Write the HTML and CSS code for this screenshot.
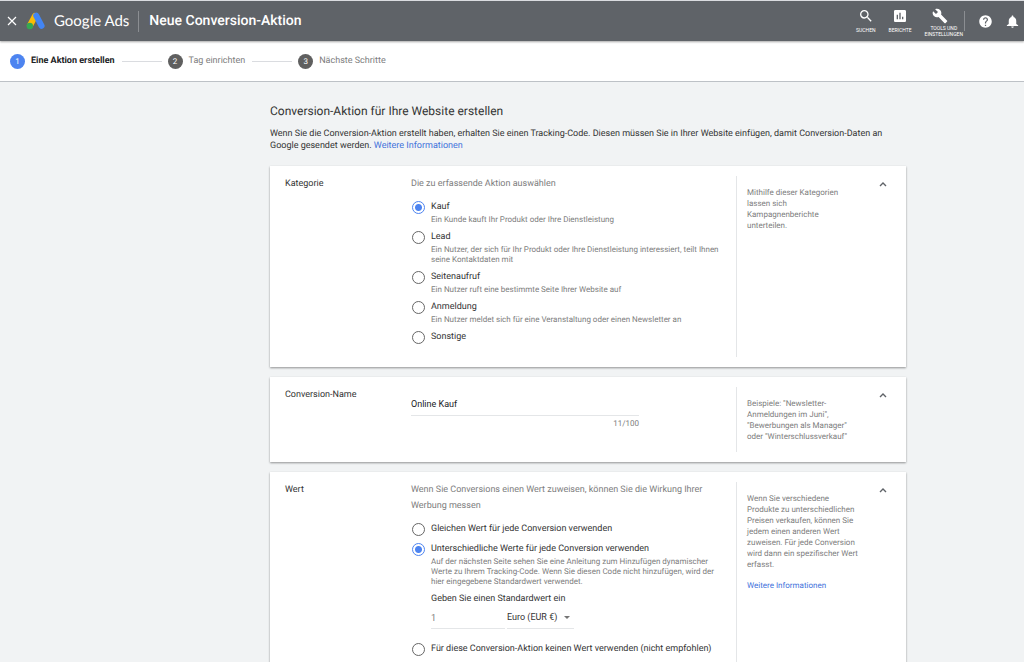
FILE: index.html
```
<!DOCTYPE html>
<html lang="de">
<head>
    <meta charset="UTF-8">
    <meta name="viewport" content="width=device-width, initial-scale=1.0">
    <title>Neue Conversion-Aktion - Google Ads</title>
    <link rel="stylesheet" href="styles.css">
</head>
<body>
    <header class="topbar">
        <button class="close" type="button" aria-label="Schließen">
            <svg width="10" height="10" viewBox="0 0 10 10"><path d="M1 1l8 8M9 1l-8 8" stroke="#fff" stroke-width="1.2"/></svg>
        </button>
        <svg class="logo" width="20" height="18" viewBox="0 0 20 18">
            <path d="M9 4L4 13.5" stroke="#fbbc04" stroke-width="6" stroke-linecap="round"/>
            <path d="M10.2 3.6L15.6 13.8" stroke="#4285f4" stroke-width="6" stroke-linecap="round"/>
            <circle cx="3.8" cy="14" r="3.2" fill="#34a853"/>
        </svg>
        <span class="brand">Google Ads</span>
        <h1 class="page-title">Neue Conversion-Aktion</h1>
        <nav class="tools">
            <button class="tool" type="button">
                <svg width="16" height="16" viewBox="0 0 24 24"><path fill="#fff" d="M15.5 14h-.79l-.28-.27A6.47 6.47 0 0 0 16 9.5 6.5 6.5 0 1 0 9.5 16c1.61 0 3.09-.59 4.23-1.57l.27.28v.79l5 4.99L20.49 19l-4.99-5zm-6 0C7.01 14 5 11.99 5 9.5S7.01 5 9.5 5 14 7.01 14 9.5 11.99 14 9.5 14z"/></svg>
                <span>SUCHEN</span>
            </button>
            <button class="tool" type="button">
                <svg width="16" height="16" viewBox="0 0 24 24"><path fill="#fff" d="M19 3H5c-1.1 0-2 .9-2 2v14c0 1.1.9 2 2 2h14c1.1 0 2-.9 2-2V5c0-1.1-.9-2-2-2zM9 17H7v-7h2v7zm4 0h-2V7h2v10zm4 0h-2v-4h2v4z"/></svg>
                <span>BERICHTE</span>
            </button>
            <button class="tool tool-settings" type="button">
                <svg width="16" height="16" viewBox="0 0 24 24"><path fill="#fff" d="M22.7 19l-9.1-9.1c.9-2.3.4-5-1.5-6.9-2-2-5-2.4-7.4-1.3L9 6 6 9 1.6 4.7C.4 7.1.9 10.1 2.9 12.1c1.9 1.9 4.6 2.4 6.9 1.5l9.1 9.1c.4.4 1 .4 1.4 0l2.3-2.3c.5-.4.5-1.1.1-1.4z"/></svg>
                <span>TOOLS UND<br>EINSTELLUNGEN</span>
            </button>
        </nav>
        <div class="alerts">
            <button type="button" aria-label="Hilfe">
                <svg width="15" height="15" viewBox="0 0 24 24"><path fill="#fff" d="M12 2C6.48 2 2 6.48 2 12s4.48 10 10 10 10-4.48 10-10S17.52 2 12 2zm1 17h-2v-2h2v2zm2.07-7.75l-.9.92C13.45 12.9 13 13.5 13 15h-2v-.5c0-1.1.45-2.1 1.17-2.83l1.24-1.26c.37-.36.59-.86.59-1.41 0-1.1-.9-2-2-2s-2 .9-2 2H8c0-2.21 1.79-4 4-4s4 1.79 4 4c0 .88-.36 1.68-.93 2.25z"/></svg>
            </button>
            <button type="button" aria-label="Benachrichtigungen">
                <svg width="15" height="15" viewBox="0 0 24 24"><path fill="#fff" d="M12 22c1.1 0 2-.9 2-2h-4c0 1.1.9 2 2 2zm6-6v-5c0-3.07-1.64-5.64-4.5-6.32V4c0-.83-.67-1.5-1.5-1.5s-1.5.67-1.5 1.5v.68C7.63 5.36 6 7.92 6 11v5l-3 2v1h18v-1l-3-2z"/></svg>
            </button>
        </div>
    </header>

    <ol class="steps">
        <li class="step active"><span class="num">1</span>Eine Aktion erstellen</li>
        <li class="step"><span class="num">2</span>Tag einrichten</li>
        <li class="step"><span class="num">3</span>Nächste Schritte</li>
    </ol>

    <main class="content">
        <h2>Conversion-Aktion für Ihre Website erstellen</h2>
        <p class="intro">Wenn Sie die Conversion-Aktion erstellt haben, erhalten Sie einen Tracking-Code. Diesen müssen Sie in Ihrer Website einfügen, damit Conversion-Daten an Google gesendet werden. <a href="#">Weitere Informationen</a></p>

        <section class="card">
            <h3>Kategorie</h3>
            <div class="fields">
                <p class="lead">Die zu erfassende Aktion auswählen</p>
                <div class="options">
                    <div class="option">
                        <input type="radio" name="kategorie" id="kauf" checked>
                        <label for="kauf">Kauf<small>Ein Kunde kauft Ihr Produkt oder Ihre Dienstleistung</small></label>
                    </div>
                    <div class="option">
                        <input type="radio" name="kategorie" id="lead">
                        <label for="lead">Lead<small>Ein Nutzer, der sich für Ihr Produkt oder Ihre Dienstleistung interessiert, teilt Ihnen seine Kontaktdaten mit</small></label>
                    </div>
                    <div class="option">
                        <input type="radio" name="kategorie" id="seitenaufruf">
                        <label for="seitenaufruf">Seitenaufruf<small>Ein Nutzer ruft eine bestimmte Seite Ihrer Website auf</small></label>
                    </div>
                    <div class="option">
                        <input type="radio" name="kategorie" id="anmeldung">
                        <label for="anmeldung">Anmeldung<small>Ein Nutzer meldet sich für eine Veranstaltung oder einen Newsletter an</small></label>
                    </div>
                    <div class="option">
                        <input type="radio" name="kategorie" id="sonstige">
                        <label for="sonstige">Sonstige</label>
                    </div>
                </div>
            </div>
            <aside class="help">
                <p>Mithilfe dieser Kategorien lassen sich Kampagnenberichte unterteilen.</p>
                <button class="toggle" type="button" aria-label="Kategorie einklappen">
                    <svg width="8" height="6" viewBox="0 0 8 6"><path d="M1 5l3-3 3 3" fill="none" stroke="#5f6368" stroke-width="1.4"/></svg>
                </button>
            </aside>
        </section>

        <section class="card">
            <h3><label for="name">Conversion-Name</label></h3>
            <div class="fields">
                <div class="name-field">
                    <input class="text" type="text" id="name" value="Online Kauf" maxlength="100">
                    <span class="counter">11/100</span>
                </div>
            </div>
            <aside class="help">
                <p>Beispiele: "Newsletter-Anmeldungen im Juni", "Bewerbungen als Manager" oder "Winterschlussverkauf"</p>
                <button class="toggle" type="button" aria-label="Conversion-Name einklappen">
                    <svg width="8" height="6" viewBox="0 0 8 6"><path d="M1 5l3-3 3 3" fill="none" stroke="#5f6368" stroke-width="1.4"/></svg>
                </button>
            </aside>
        </section>

        <section class="card">
            <h3>Wert</h3>
            <div class="fields">
                <p class="lead">Wenn Sie Conversions einen Wert zuweisen, können Sie die Wirkung Ihrer Werbung messen</p>
                <div class="options">
                    <div class="option">
                        <input type="radio" name="wert" id="gleich">
                        <label for="gleich">Gleichen Wert für jede Conversion verwenden</label>
                    </div>
                    <div class="option">
                        <input type="radio" name="wert" id="unterschiedlich" checked>
                        <label for="unterschiedlich">Unterschiedliche Werte für jede Conversion verwenden<small>Auf der nächsten Seite sehen Sie eine Anleitung zum Hinzufügen dynamischer Werte zu Ihrem Tracking-Code. Wenn Sie diesen Code nicht hinzufügen, wird der hier eingegebene Standardwert verwendet.</small></label>
                    </div>
                    <div class="default-value">
                        <label for="betrag">Geben Sie einen Standardwert ein</label>
                        <div class="amount">
                            <input class="text" type="text" id="betrag" value="1">
                            <select aria-label="Währung">
                                <option>Euro (EUR €)</option>
                            </select>
                        </div>
                    </div>
                    <div class="option">
                        <input type="radio" name="wert" id="kein">
                        <label for="kein">Für diese Conversion-Aktion keinen Wert verwenden (nicht empfohlen)</label>
                    </div>
                </div>
            </div>
            <aside class="help">
                <p>Wenn Sie verschiedene Produkte zu unterschiedlichen Preisen verkaufen, können Sie jedem einen anderen Wert zuweisen. Für jede Conversion wird dann ein spezifischer Wert erfasst.</p>
                <p><a href="#">Weitere Informationen</a></p>
                <button class="toggle" type="button" aria-label="Wert einklappen">
                    <svg width="8" height="6" viewBox="0 0 8 6"><path d="M1 5l3-3 3 3" fill="none" stroke="#5f6368" stroke-width="1.4"/></svg>
                </button>
            </aside>
        </section>
    </main>
</body>
</html>
```
FILE: styles.css
```
* {
    box-sizing: border-box;
}

body {
    margin: 0;
    font-family: Roboto, Arial, sans-serif;
    font-size: 9px;
    line-height: 15px;
    text-rendering: geometricPrecision;
    color: #333;
    background-color: #f1f3f4;
}

h1, h2, h3, p {
    margin: 0;
    font-weight: 400;
}

h3 {
    font-size: 9px;
    line-height: 16px;
}

a {
    color: #4272db;
    text-decoration: none;
}

button {
    padding: 0;
    border: 0;
    background: none;
    font-family: inherit;
    color: inherit;
}

button svg {
    display: block;
}

/* Kopfzeile */
.topbar {
    position: relative;
    display: flex;
    align-items: center;
    height: 41px;
    padding: 0 4px 0 7px;
    border-top: 1px solid #dadce0;
    background-color: #5f6368;
    color: #fff;
    box-shadow: 0 1px 2px rgba(0, 0, 0, 0.35);
}

.logo {
    margin-left: 9px;
}

.brand {
    margin-left: 8px;
    font-family: Lato, sans-serif;
    font-size: 15px;
}

.page-title {
    margin-left: 9px;
    padding-left: 10px;
    border-left: 1px solid #8b8e92;
    font-size: 14px;
    font-weight: 500;
    line-height: 21px;
}

.tools {
    display: flex;
    align-self: stretch;
    align-items: flex-start;
    gap: 13px;
    margin-left: auto;
    padding: 7px 1px 0 0;
}

.tool {
    display: flex;
    flex-direction: column;
    align-items: center;
    gap: 3px;
    font-size: 5px;
    line-height: 6px;
}

.tool-settings {
    gap: 1px;
}

.tool-settings svg {
    margin-right: 8px;
}

.alerts {
    display: flex;
    align-items: center;
    gap: 12px;
    height: 20px;
    padding-left: 13px;
    border-left: 1px solid #8b8e92;
}

/* Schritte */
.steps {
    display: flex;
    align-items: center;
    height: 41px;
    margin: 0;
    padding: 0 10px;
    list-style: none;
    background-color: #fff;
    border-bottom: 1px solid #bdc1c6;
    color: #7d7d7d;
}

.step {
    display: flex;
    align-items: center;
}

.step + .step::before {
    content: "";
    width: 40px;
    height: 1px;
    margin: 0 6px 0 7px;
    background-color: #dadce0;
}

.step.active {
    color: #202124;
    font-weight: 700;
}

.num {
    width: 15px;
    height: 15px;
    margin-right: 6px;
    border-radius: 50%;
    background-color: #5f5f5f;
    color: #fff;
    font-size: 8px;
    font-weight: 400;
    line-height: 15px;
    text-align: center;
}

.active .num {
    background-color: #4d84f0;
}

/* Inhalt */
.content {
    padding: 19px 118px 20px 270px;
}

h2 {
    font-size: 12px;
    line-height: 20px;
}

.intro {
    margin: 7px 0 14px;
    line-height: 12px;
}

.card {
    display: grid;
    grid-template-columns: 126px 1fr 160px;
    margin-bottom: 10px;
    padding: 10px 10px 10px 15px;
    background-color: #fff;
    box-shadow: 0 1px 2px rgba(0, 0, 0, 0.4);
}

.fields {
    padding: 0 14px 12px 0;
}

.lead {
    margin-bottom: 8px;
    line-height: 16px;
    color: #7d7d7d;
}

.options {
    display: flex;
    flex-direction: column;
    gap: 5px;
}

.option {
    display: flex;
    align-items: flex-start;
    gap: 6px;
}

.option input {
    flex: none;
    appearance: none;
    width: 13px;
    height: 13px;
    margin: 1px 0 0 1px;
    border: 1px solid #666;
    border-radius: 50%;
    background-color: #fff;
}

.option input:checked {
    border-color: #4d84f0;
    background: radial-gradient(circle, #4d84f0 3px, #fff 4px);
}

small {
    display: block;
    font-size: 8px;
    line-height: 10px;
    color: #7d7d7d;
}

.text {
    padding: 0;
    border: 0;
    border-bottom: 1px solid #e4e6e8;
    border-radius: 0;
    background: none;
    font: inherit;
    color: #202124;
}

.name-field {
    display: flex;
    flex-direction: column;
    width: 228px;
    padding: 6px 0 9px;
}

.name-field .text {
    height: 23px;
}

.counter {
    align-self: flex-end;
    font-size: 8px;
    color: #7d7d7d;
}

.default-value {
    padding-left: 20px;
}

.default-value label {
    display: block;
}

.amount {
    display: flex;
    gap: 2px;
    margin-bottom: 8px;
}

.amount .text {
    width: 74px;
    height: 22px;
    color: #7d7d7d;
}

select {
    appearance: none;
    width: 67px;
    height: 22px;
    padding: 0;
    border: 0;
    border-bottom: 1px solid #e4e6e8;
    border-radius: 0;
    background: url("data:image/svg+xml,%3Csvg xmlns='http://www.w3.org/2000/svg' width='6' height='3'%3E%3Cpath d='M0 0h6L3 3z' fill='%23757575'/%3E%3C/svg%3E") no-repeat right 4px center;
    font: inherit;
    color: #333;
}

.help {
    position: relative;
    padding: 11px 37px 0 10px;
    border-left: 1px solid #e4e6e8;
    font-size: 8px;
    line-height: 11px;
    color: #7d7d7d;
}

.help p + p {
    margin-top: 10px;
}

.toggle {
    position: absolute;
    top: 5px;
    right: 9px;
}
```
